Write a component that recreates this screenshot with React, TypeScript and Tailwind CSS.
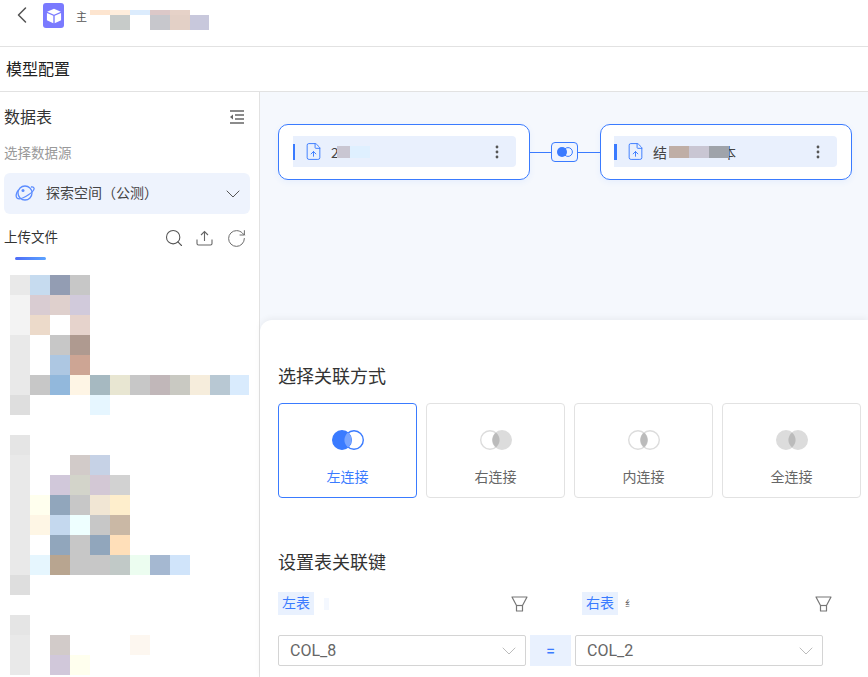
import { ChevronLeft, ChevronDown, Search, RotateCw, FileUp } from "lucide-react";

const _ = "";
const mosaic: string[][] = [
  ["bg-[#e9e9e9]", "bg-[#c6dbef]", "bg-[#939db3]", "bg-[#c7c7c7]"],
  ["bg-[#f3f3f3]", "bg-[#d9ccd2]", "bg-[#dfd0cd]", "bg-[#d1cadb]"],
  ["bg-[#f3f3f3]", "bg-[#ecdaca]", _, "bg-[#e6d3cc]"],
  ["bg-[#e9e9e9]", _, "bg-[#c7c7c7]", "bg-[#af9a90]"],
  ["bg-[#e9e9e9]", _, "bg-[#adc7e2]", "bg-[#cda594]"],
  ["bg-[#e9e9e9]", "bg-[#c7c7c7]", "bg-[#92b8dc]", "bg-[#fef5e5]", "bg-[#a6b9c1]", "bg-[#e8e6d2]", "bg-[#c7c7c7]", "bg-[#c1b7b9]", "bg-[#c9c9c2]", "bg-[#f6eddc]", "bg-[#b8c8d3]", "bg-[#d9ebfd]"],
  ["bg-[#dedede]", _, _, _, "bg-[#e6f6ff]"],
  [_],
  ["bg-[#e5e5e5]"],
  ["bg-[#e9e9e9]", _, _, "bg-[#d2cbc9]", "bg-[#c6d2e6]"],
  ["bg-[#e9e9e9]", _, "bg-[#d1c8da]", "bg-[#d3d4ca]", "bg-[#d3c8d5]", "bg-[#d2d2d2]"],
  ["bg-[#e9e9e9]", "bg-[#ffffee]", "bg-[#91a6bc]", "bg-[#c7c7c7]", "bg-[#f1e6d4]", "bg-[#feeecc]"],
  ["bg-[#e9e9e9]", "bg-[#fef6e5]", "bg-[#c4d8ee]", "bg-[#eeffff]", "bg-[#c7c7c7]", "bg-[#cab8a5]"],
  ["bg-[#e9e9e9]", _, "bg-[#91a6bc]", "bg-[#c7c7c7]", "bg-[#91a6bc]", "bg-[#ffdfb9]"],
  ["bg-[#e9e9e9]", "bg-[#e6f6fe]", "bg-[#b8a590]", "bg-[#c7c7c7]", "bg-[#c7c7c7]", "bg-[#c1c9c7]", "bg-[#ecfdf0]", "bg-[#a5b8d1]", "bg-[#d0e4fa]"],
  ["bg-[#dedede]"],
  [_],
  ["bg-[#e5e5e5]"],
  ["bg-[#e9e9e9]", _, "bg-[#d2cbc9]", _, _, _, "bg-[#fdf7f0]"],
  ["bg-[#e9e9e9]", _, "bg-[#d1c8da]", "bg-[#ffffee]"],
];

function Mosaic() {
  return (
    <div className="grid grid-cols-[repeat(11,20px)_19px] auto-rows-[20px] ml-[10px]">
      {mosaic.map((row, r) =>
        Array.from({ length: 12 }).map((_c, c) => <div key={`${r}-${c}`} className={row[c] || ""} />)
      )}
    </div>
  );
}

function Dots() {
  return (
    <svg width="4" height="14" viewBox="0 0 4 14" className="shrink-0">
      <circle cx="2" cy="2" r="1.4" fill="#555" />
      <circle cx="2" cy="7" r="1.4" fill="#555" />
      <circle cx="2" cy="12" r="1.4" fill="#555" />
    </svg>
  );
}

function Filter() {
  return (
    <svg width="17" height="16" viewBox="0 0 17 16" fill="none" stroke="#777" strokeWidth="1.2" strokeLinejoin="round">
      <path d="M1 1h15l-4.500 8.500v5.500h-6v-5.500z" />
      <path d="M5.500 9.500h6" />
    </svg>
  );
}

type Kind = "left" | "right" | "inner" | "full";
function JoinIcon({ kind }: { kind: Kind }) {
  const blue = kind === "left";
  const line = blue ? "#3a7bff" : "#dcdcdc";
  const lens = "M16 2.6a9.4 9.4 0 0 1 0 14.8a9.4 9.4 0 0 1 0-14.8z";
  return (
    <svg width="32" height="20" viewBox="0 0 32 20">
      <circle cx="10" cy="10" r="9.3" fill={blue || kind === "full" ? line : "white"} stroke={line} strokeWidth="1.4" />
      <circle cx="22" cy="10" r="9.3" fill={kind === "right" || kind === "full" ? line : "transparent"} stroke={line} strokeWidth="1.4" />
      <path d={lens} fill={blue ? "#79a5ff" : "#bbbbbb"} />
    </svg>
  );
}

function JoinCard({ kind, label, active }: { kind: Kind; label: string; active?: boolean }) {
  return (
    <div className={active ? "w-[139px] h-[95px] rounded-[4px] border border-[#3a7bff] flex flex-col items-center" : "w-[139px] h-[95px] rounded-[4px] border border-[#e2e2e2] flex flex-col items-center"}>
      <div className="mt-[26px] h-[20px]"><JoinIcon kind={kind} /></div>
      <div className={active ? "mt-[15px] text-[14px] leading-[22px] text-[#3a7bff]" : "mt-[15px] text-[14px] leading-[22px] text-[#666666]"}>{label}</div>
    </div>
  );
}

function Select({ value }: { value: string }) {
  return (
    <div className="w-[248px] h-[31px] rounded-[2px] border border-[#d4d4d4] flex items-center justify-between pl-[11px] pr-[4px]">
      <span className="text-[16px] text-[#666666] font-['Roboto',sans-serif] leading-none">{value}</span>
      <ChevronDown size={24} strokeWidth={0.9} className="text-[#b4b4b4]" />
    </div>
  );
}

function Node({ children, tick, pad }: { children: React.ReactNode; tick: string; pad: string }) {
  return (
    <div className={pad}>
      <div className="h-[31px] bg-[#e9f0fd] rounded-r-[4px] flex items-center pr-[17px]">
        <div className={tick} />
        <FileUp size={19} strokeWidth={1.2} className="ml-[9px] text-[#3a7bff] shrink-0" />
        <div className="ml-[8px] flex-1 flex items-center text-[14px] text-[#444444] leading-none">{children}</div>
        <Dots />
      </div>
    </div>
  );
}

export default function App() {
  return (
    <div className="w-[868px] h-[677px] overflow-hidden bg-white flex flex-col font-['Noto_Sans_CJK_SC','Liberation_Sans',sans-serif] text-[#333333]">
      <header className="h-[47px] shrink-0 border-b border-[#e2e2e2] flex items-start pl-[8px] pt-[3px]">
        <ChevronLeft size={28} strokeWidth={1.3} className="-mt-[2px] text-[#555555]" />
        <div className="ml-[7px] w-[21px] h-[25px] rounded-[3px] bg-[#7a7aff] flex items-center justify-center">
          <svg width="16" height="16" viewBox="0 0 14 14" fill="white">
            <path d="M7 .6l6 2.6L7 5.9 1 3.2z" />
            <path d="M.8 4.3l5.600 2.500v6.600L.8 10.800z" />
            <path d="M13.200 4.300L7.600 6.800v6.600l5.600-2.600z" />
          </svg>
        </div>
        <span className="ml-[12px] mt-[5px] w-[11px] text-[11px] leading-[16px] text-[#555555]">主</span>
        <div className="ml-[3px] mt-[7px] grid grid-cols-[repeat(5,20px)_19px] grid-rows-[5px_15px]">
          <div className="bg-[#fde5d0]" />
          <div className="bg-[#feeddc]" />
          <div className="bg-[#dcecfd]" />
          <div className="bg-[#dcc8c8]" />
          <div className="bg-[#e6d2c8]" />
          <div />
          <div />
          <div className="bg-[#c7cbc9]" />
          <div />
          <div className="bg-[#c7c7cc]" />
          <div className="bg-[#e3d0c6]" />
          <div className="bg-[#c8c8dc]" />
        </div>
      </header>

      <div className="h-[45px] shrink-0 border-b border-[#e2e2e2] pl-[6px] pb-[2px] flex items-center text-[16px] text-[#222222]">模型配置</div>

      <div className="flex-1 flex min-h-0">
        <aside className="w-[260px] shrink-0 border-r border-[#e2e2e2] overflow-hidden">
          <div className="h-[50px] pl-[4px] pr-[15px] flex items-center justify-between">
            <span className="text-[16px] text-[#333333] -translate-y-px">数据表</span>
            <svg width="15" height="14" viewBox="0 0 15 14" fill="none" stroke="#666" strokeWidth="1.4">
              <path d="M1 1h14M6 5h9M6 9h9M1 13h14" />
              <path d="M4 4.500L1 7l3 2.500z" fill="#666" stroke="none" />
            </svg>
          </div>
          <div className="h-[22px] pl-[4px] pb-[2px] flex items-center text-[13.5px] text-[#999999]">选择数据源</div>
          <div className="mt-[9px] ml-[4px] w-[246px] h-[41px] rounded-[6px] bg-[#eef3fd] flex items-center pl-[11px] pr-[5px]">
            <svg width="20" height="20" viewBox="0 0 20 20" fill="none" stroke="#5b8cff" strokeWidth="1.3">
              <circle cx="10" cy="9" r="7" />
              <path d="M3.500 6C1 9 .5 12.500 2 14c2 1.800 7.500-.5 11.500-3.200S19.500 5.500 19 4c-.3-1-1.500-1.300-3-1" />
              <circle cx="8" cy="6.500" r="1.500" fill="#5b8cff" stroke="none" />
            </svg>
            <span className="ml-[11px] flex-1 text-[14px] text-[#444444] -translate-y-px">探索空间（公测）</span>
            <ChevronDown size={24} strokeWidth={1} className="text-[#555555]" />
          </div>
          <div className="mt-[12px] h-[24px] pl-[4px] pr-[12px] flex items-center">
            <span className="flex-1 text-[13.5px] text-[#333333] -translate-y-[2px]">上传文件</span>
            <Search size={20} strokeWidth={1.3} className="text-[#555555]" />
            <svg width="17" height="16" viewBox="0 0 17 16" fill="none" stroke="#666" strokeWidth="1.1" className="ml-[12px]">
              <path d="M1 9.500v4a1.500 1.500 0 0 0 1.500 1.500h12a1.500 1.500 0 0 0 1.500-1.500v-4" />
              <path d="M8.500 11V1.500M5 5l3.500-3.500L12 5" />
            </svg>
            <RotateCw size={21} strokeWidth={1.1} className="ml-[13px] text-[#666666]" />
          </div>
          <div className="mt-[7px] ml-[15px] w-[31px] h-[3px] rounded-full bg-gradient-to-r from-[#4f6cf7] to-[#5ba3ff]" />
          <div className="mt-[15px]"><Mosaic /></div>
        </aside>

        <main className="flex-1 min-w-0 bg-[#f5f8fd] flex flex-col">
          <div className="h-[228px] shrink-0 pt-[32px] pl-[18px]">
            <div className="flex items-center">
              <Node tick="w-[2px] h-[16px] bg-[#3a7bff]" pad="w-[252px] h-[56px] shrink-0 bg-white rounded-[10px] border border-[#3a7bff] pl-[14px] pr-[13px] pt-[11px] shadow-[0_2px_6px_rgba(58,123,255,0.08)]">
                <span>2</span>
                <span className="-ml-[2px] w-[13px] h-[12px] bg-[#c9c6d2]" />
                <span className="w-[20px] h-[12px] bg-[#dff0ff]" />
              </Node>
              <div className="w-[21px] h-px bg-[#3a7bff]" />
              <div className="w-[27px] h-[20px] rounded-[4px] border border-[#3a7bff] bg-[#f0f5fe] flex items-center justify-center">
                <svg width="16" height="10" viewBox="0 0 16 10">
                  <circle cx="5" cy="5" r="5" fill="#3a7bff" />
                  <circle cx="11" cy="5" r="4.400" fill="none" stroke="#3a7bff" strokeWidth="1" />
                </svg>
              </div>
              <div className="w-[22px] h-px bg-[#3a7bff]" />
              <Node tick="w-[3px] h-[16px] bg-[#3a7bff]" pad="w-[252px] h-[56px] shrink-0 bg-white rounded-[10px] border border-[#3a7bff] pl-[13px] pr-[14px] pt-[11px] shadow-[0_2px_6px_rgba(58,123,255,0.08)]">
                <span>结</span>
                <span className="relative z-10 ml-[2px] w-[20px] h-[12px] bg-[#bfaea6]" />
                <span className="relative z-10 w-[20px] h-[12px] bg-[#c9c6d3]" />
                <span className="relative z-10 w-[20px] h-[12px] bg-[#9fa3aa]" />
                <span className="-ml-[7px]">本</span>
              </Node>
            </div>
          </div>

          <div className="flex-1 bg-white rounded-tl-[12px] shadow-[0_-2px_6px_rgba(0,0,0,0.05)] pl-[18px] pt-[43px]">
            <h2 className="h-[24px] flex items-center text-[18px] text-[#333333] font-normal">选择关联方式</h2>
            <div className="mt-[16px] flex gap-[9px]">
              <JoinCard kind="left" label="左连接" active />
              <JoinCard kind="right" label="右连接" />
              <JoinCard kind="inner" label="内连接" />
              <JoinCard kind="full" label="全连接" />
            </div>
            <h2 className="mt-[51px] h-[24px] flex items-center text-[18px] text-[#333333] font-normal">设置表关联键</h2>
            <div className="mt-[19px] flex gap-[54px]">
              <div className="w-[250px] flex items-center">
                <span className="w-[36px] h-[23px] pb-[2px] bg-[#e9f1fe] text-[#3a7bff] text-[14px] flex items-center justify-center">左表</span>
                <span className="ml-[10px] w-[5px] h-[12px] bg-[#f4f8ff]" />
                <span className="flex-1" />
                <Filter />
              </div>
              <div className="w-[250px] flex items-center">
                <span className="w-[36px] h-[23px] pb-[2px] bg-[#e9f1fe] text-[#3a7bff] text-[14px] flex items-center justify-center">右表</span>
                <span className="ml-[7px] text-[9px] leading-[14px] text-[#555555]">纟</span>
                <span className="flex-1" />
                <Filter />
              </div>
            </div>
            <div className="mt-[20px] flex items-center">
              <Select value="COL_8" />
              <div className="mx-[4px] w-[41px] h-[31px] bg-[#e9f1fe] text-[#3a7bff] text-[13px] font-bold flex items-center justify-center">=</div>
              <Select value="COL_2" />
            </div>
          </div>
        </main>
      </div>
    </div>
  );
}
